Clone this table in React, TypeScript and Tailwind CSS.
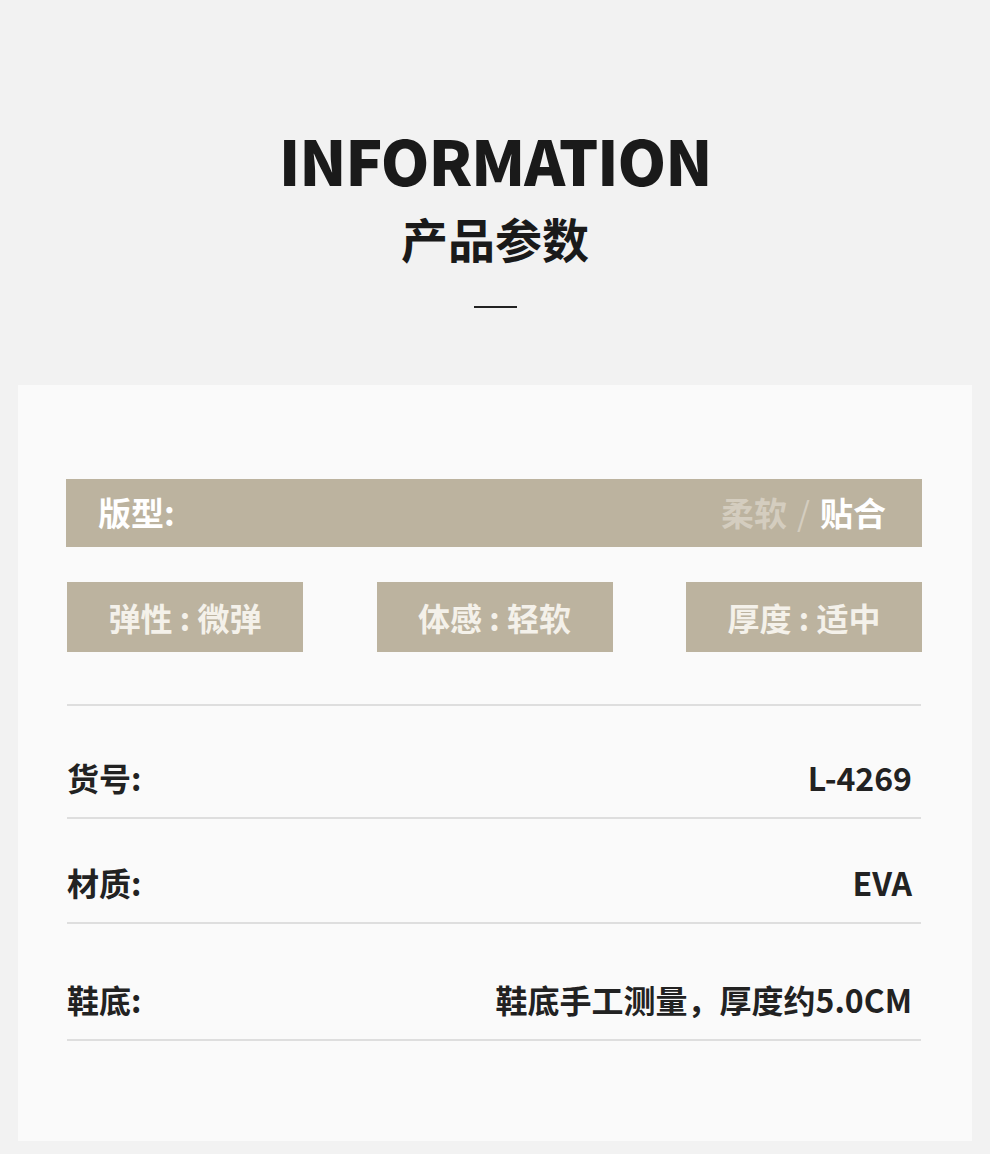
// 产品参数 信息卡
const cjk = { fontFamily: '"Noto Sans CJK SC", "Noto Sans", sans-serif' }

type Row = { label: string; value: string; pad: string }

const rows: Row[] = [
  { label: "货号:", value: "L-4269", pad: "pt-[50px] pb-[19px]" },
  { label: "材质:", value: "EVA", pad: "pt-[42px] pb-[19px]" },
  { label: "鞋底:", value: "鞋底手工测量，厚度约5.0CM", pad: "pt-[54px] pb-[19px]" },
]

const chips = ["弹性 : 微弹", "体感 : 轻软", "厚度 : 适中"]

export default function App() {
  return (
    <div className="w-[990px] h-[1154px] bg-[#f2f2f2] pt-[124px]" style={cjk}>
      <div className="flex flex-col items-center">
        <h1 className="text-[62px] leading-[70px] font-black text-[#1a1a1a] tracking-[-1.2px]">INFORMATION</h1>
        <h2 className="mt-[16px] text-[47px] leading-[56px] font-bold text-[#1a1a1a]">产品参数</h2>
        <div className="mt-[40px] w-[43px] h-[2px] bg-[#222]" />
      </div>

      <div className="mt-[77px] mx-[18px] h-[756px] bg-[#fafafa] pl-[48px] pr-[50px] pt-[94px]">
        <div className="h-[68px] bg-[#bcb39f] flex items-center justify-between pl-[32px] pr-[36px]">
          <span className="text-[33px] font-bold text-white">版型:</span>
          <span className="text-[33px] font-bold">
            <span className="text-[#d4cdbf]">柔软</span>
            <span className="text-[#d4cdbf] font-normal mx-[10px]">/</span>
            <span className="text-white">贴合</span>
          </span>
        </div>

        <div className="mt-[35px] flex justify-between pl-[1px]">
          {chips.map((c) => (
            <div key={c} className="w-[236px] h-[70px] bg-[#bcb39f] flex items-center justify-center">
              <span className="text-[32px] font-bold text-[#f4f1ea] whitespace-pre">{c}</span>
            </div>
          ))}
        </div>

        <div className="mt-[52px] mx-[1px] border-t-2 border-[#dedede]">
          {rows.map((r) => (
            <div key={r.label} className={`${r.pad} border-b-2 border-[#dedede]`}>
              <div className="flex items-center justify-between h-[42px]">
                <span className="text-[32px] font-bold text-[#222]">{r.label}</span>
                <span className="text-[32px] font-bold text-[#222] mr-[9px]">{r.value}</span>
              </div>
            </div>
          ))}
        </div>
      </div>
    </div>
  )
}
